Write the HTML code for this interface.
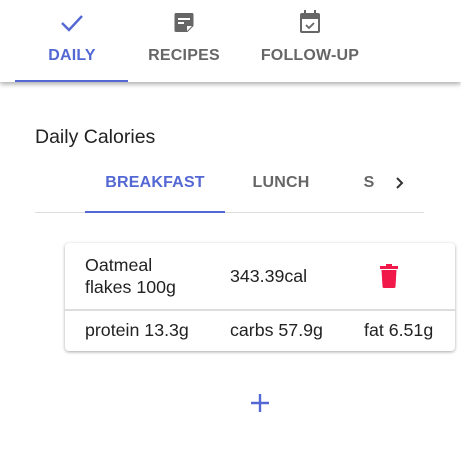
<!DOCTYPE html>
<html><head><style>
body{margin:0;width:461px;height:468px;background:#fff;font-family:"Liberation Sans",Roboto,sans-serif;position:relative;overflow:hidden}
.hdr{position:absolute;left:0;top:0;width:461px;height:82px;background:#fff;box-shadow:0 2px 5px rgba(0,0,0,.35)}
.t{position:absolute;font-size:16px;font-weight:bold;letter-spacing:0.2px;color:#666;top:47px;transform:translateX(-50%);white-space:nowrap}
.abs{position:absolute}
.txt{position:absolute;font-size:17.8px;color:#222;white-space:nowrap}
</style></head><body>
<div class="hdr">
<svg class="abs" style="left:59px;top:12px" width="26" height="22" viewBox="0 0 26 22"><path d="M3 11 L10 18 L23 4" fill="none" stroke="#5468d4" stroke-width="2.4"/></svg>
<svg class="abs" style="left:172px;top:11px" width="24" height="24" viewBox="0 0 24 24"><path d="M4 2h16a1.5 1.5 0 0 1 1.5 1.5V15l-6 6H4a1.5 1.5 0 0 1-1.5-1.5v-16A1.5 1.5 0 0 1 4 2z" fill="#666"/><rect x="6" y="7" width="12" height="2" fill="#fff"/><rect x="6" y="11" width="6" height="2" fill="#fff"/><path d="M15 20v-5h5" fill="#fff"/></svg>
<svg class="abs" style="left:297px;top:9px" width="26" height="26" viewBox="0 0 26 26"><rect x="3" y="4" width="20" height="20" rx="2" fill="#666"/><rect x="5" y="10" width="16" height="12" fill="#fff"/><rect x="7" y="1" width="2" height="5" fill="#666"/><rect x="17" y="1" width="2" height="5" fill="#666"/><path d="M9 16l3 3 5-5" fill="none" stroke="#666" stroke-width="1.8"/></svg>
<div class="t" style="left:72px;color:#5468d4">DAILY</div>
<div class="t" style="left:184px">RECIPES</div>
<div class="t" style="left:310px">FOLLOW-UP</div>
<div class="abs" style="left:15px;top:80px;width:113px;height:2px;background:#5468d4"></div>
</div>
<div class="txt" style="left:35px;top:126px;font-size:19.5px">Daily Calories</div>
<div class="t" style="left:155px;top:174px;color:#5468d4">BREAKFAST</div>
<div class="t" style="left:281px;top:174px">LUNCH</div>
<div class="t" style="left:369px;top:174px">S</div>
<svg class="abs" style="left:394px;top:175px" width="12" height="16" viewBox="0 0 12 16"><path d="M3 3l5 5-5 5" fill="none" stroke="#333" stroke-width="2"/></svg>
<div class="abs" style="left:35px;top:212px;width:389px;height:1px;background:#ddd"></div>
<div class="abs" style="left:85px;top:211px;width:140px;height:2px;background:#5468d4"></div>
<div class="abs" style="left:65px;top:243px;width:390px;height:108px;border-radius:4px;background:#fff;box-shadow:0 1px 3px rgba(0,0,0,.35)"></div>
<div class="abs" style="left:65px;top:309px;width:390px;height:2px;background:#ddd"></div>
<div class="txt" style="left:85px;top:254px;line-height:22px">Oatmeal<br>flakes 100g</div>
<div class="txt" style="left:230px;top:266px">343.39cal</div>
<svg class="abs" style="left:379px;top:264px" width="20" height="24" viewBox="0 0 20 24"><rect x="1" y="2" width="18" height="3" fill="#f0194a"/><rect x="7" y="0" width="6" height="3" fill="#f0194a"/><path d="M2.5 6h15l-1 16.5a1.5 1.5 0 0 1-1.5 1.5H5a1.5 1.5 0 0 1-1.5-1.5z" fill="#f0194a"/></svg>
<div class="txt" style="left:85px;top:320px">protein 13.3g</div>
<div class="txt" style="left:230px;top:320px">carbs 57.9g</div>
<div class="txt" style="left:364px;top:320px">fat 6.51g</div>
<svg class="abs" style="left:250px;top:393px" width="20" height="20" viewBox="0 0 20 20"><path d="M10 1v18M1 10h18" stroke="#5468d4" stroke-width="2.4"/></svg>
</body></html>
